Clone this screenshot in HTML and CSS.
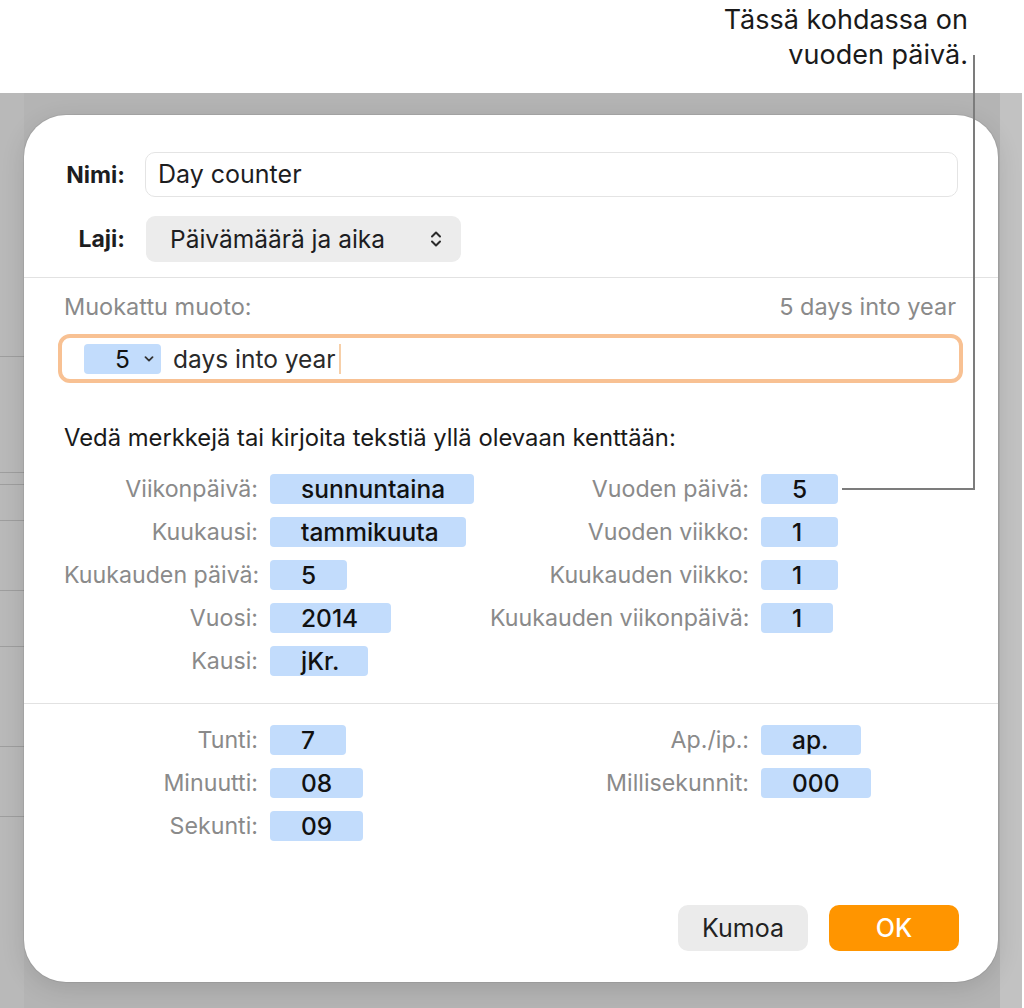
FILE: index.html
```html
<!DOCTYPE html>
<html lang="fi">
<head>
    <meta charset="UTF-8">
    <meta name="viewport" content="width=device-width, initial-scale=1.0">
    <title>Mukautettu päivämäärämuoto</title>
    <link rel="stylesheet" href="styles.css">
</head>
<body>
    <div class="callout">Tässä kohdassa on<br>vuoden päivä.</div>

    <div class="backdrop">
        <div class="sheet-lines">
            <div class="sheet-row r1"></div>
            <div class="sheet-row r2"></div>
            <div class="sheet-row r3"></div>
            <div class="sheet-row r4"></div>
            <div class="sheet-row r5"></div>
            <div class="sheet-row r6"></div>
            <div class="sheet-row r7"></div>
            <div class="sheet-row r8"></div>
        </div>

        <div class="dialog">
            <div class="dialog-top">
                <div class="field-label">Nimi:</div>
                <div class="text-input">Day counter</div>
                <div class="field-label">Laji:</div>
                <div class="popup">
                    <span>Päivämäärä ja aika</span>
                    <svg class="popup-arrows" width="12" height="20" viewBox="0 0 12 20">
                        <path d="M2 7.5 L6 3.5 L10 7.5" fill="none" stroke="#2b2b2b" stroke-width="2" stroke-linecap="round" stroke-linejoin="round"/>
                        <path d="M2 12.5 L6 16.5 L10 12.5" fill="none" stroke="#2b2b2b" stroke-width="2" stroke-linecap="round" stroke-linejoin="round"/>
                    </svg>
                </div>
            </div>

            <div class="format">
                <div class="format-head">
                    <span>Muokattu muoto:</span>
                    <span>5 days into year</span>
                </div>
                <div class="format-field">
                    <span class="token token-menu">5
                        <svg width="10" height="6" viewBox="0 0 10 6">
                            <path d="M1.5 1.2 L5 4.6 L8.5 1.2" fill="none" stroke="#333" stroke-width="1.8" stroke-linecap="round" stroke-linejoin="round"/>
                        </svg>
                    </span>
                    <span class="format-text">days into year</span>
                    <span class="caret"></span>
                </div>

                <p class="hint">Vedä merkkejä tai kirjoita tekstiä yllä olevaan kenttään:</p>

                <div class="token-grid">
                    <div class="token-label">Viikonpäivä:</div>
                    <div class="token w-204">sunnuntaina</div>
                    <div class="token-label">Vuoden päivä:</div>
                    <div class="token w-77">5</div>

                    <div class="token-label">Kuukausi:</div>
                    <div class="token w-196">tammikuuta</div>
                    <div class="token-label">Vuoden viikko:</div>
                    <div class="token w-77">1</div>

                    <div class="token-label">Kuukauden päivä:</div>
                    <div class="token w-77">5</div>
                    <div class="token-label">Kuukauden viikko:</div>
                    <div class="token w-77">1</div>

                    <div class="token-label">Vuosi:</div>
                    <div class="token w-121">2014</div>
                    <div class="token-label">Kuukauden viikonpäivä:</div>
                    <div class="token w-72">1</div>

                    <div class="token-label">Kausi:</div>
                    <div class="token w-98">jKr.</div>
                    <div></div>
                    <div></div>
                </div>
            </div>

            <div class="time">
                <div class="token-grid">
                    <div class="token-label">Tunti:</div>
                    <div class="token w-76">7</div>
                    <div class="token-label">Ap./ip.:</div>
                    <div class="token w-100">ap.</div>

                    <div class="token-label">Minuutti:</div>
                    <div class="token w-93">08</div>
                    <div class="token-label">Millisekunnit:</div>
                    <div class="token w-110">000</div>

                    <div class="token-label">Sekunti:</div>
                    <div class="token w-93">09</div>
                    <div></div>
                    <div></div>
                </div>
            </div>

            <div class="actions">
                <button class="btn btn-cancel">Kumoa</button>
                <button class="btn btn-ok">OK</button>
            </div>
        </div>
    </div>

    <!-- leader line from the callout to the "Vuoden päivä" token -->
    <svg class="leader" width="1024" height="1008" viewBox="0 0 1024 1008">
        <polyline points="974,55 974,489 842,489" fill="none" stroke="#7c7c7c" stroke-width="2"/>
    </svg>
</body>
</html>
```

FILE: styles.css
```css
* {
    margin: 0;
    padding: 0;
    box-sizing: border-box;
}

body {
    font-family: Inter, 'Noto Sans', sans-serif;
    width: 1024px;
    height: 1008px;
    overflow: hidden;
    position: relative;
    background: white;
    color: #1d1d1f;
}

.callout {
    height: 93px;
    padding: 2px 56px 0 0;
    text-align: right;
    font-size: 27px;
    line-height: 35px;
    color: #1a1a1a;
}

.backdrop {
    height: 915px;
    position: relative;
    padding: 22px 0 0 24px;
    background: linear-gradient(to right, #b4b4b4 0, #b4b4b4 1000px, #c2c2c2 1000px, #c2c2c2 1022px, #fff 1022px);
}

.sheet-lines {
    position: absolute;
    left: 0;
    top: 0;
    width: 24px;
    height: 100%;
    background: #b9b9b9;
}

.sheet-row {
    border-bottom: 1px solid #9e9e9e;
}

.r1 { height: 264px; }
.r2 { height: 116px; }
.r3 { height: 12px; }
.r4 { height: 36px; }
.r5 { height: 70px; }
.r6 { height: 56px; }
.r7 { height: 100px; }
.r8 { height: 70px; }

.dialog {
    position: relative;
    width: 974px;
    height: 867px;
    background: white;
    border-radius: 42px;
    box-shadow: 0 0 0 1px rgba(0,0,0,0.06), 0 6px 24px rgba(0,0,0,0.12);
    display: flex;
    flex-direction: column;
    overflow: hidden;
}

.dialog-top {
    display: grid;
    grid-template-columns: 61px 1fr;
    column-gap: 20px;
    row-gap: 19px;
    align-items: center;
    padding: 37px 40px 15px 40px;
    border-bottom: 1px solid #e2e2e2;
}

.field-label {
    font-size: 23px;
    font-weight: 700;
    text-align: right;
    white-space: nowrap;
    color: #1d1d1f;
}

.text-input {
    height: 45px;
    border: 1px solid #e4e4e4;
    border-radius: 10px;
    padding: 0 12px;
    font-size: 25px;
    line-height: 43px;
    color: #1d1d1f;
}

.popup {
    justify-self: start;
    width: 315px;
    height: 46px;
    margin-left: 1px;
    background: #ececec;
    border-radius: 9px;
    padding: 0 19px 0 24px;
    display: flex;
    align-items: center;
    justify-content: space-between;
    font-size: 24.5px;
    color: #1d1d1f;
}

.format {
    padding: 17px 35px 27px 34px;
    border-bottom: 1px solid #e2e2e2;
}

.format-head {
    display: flex;
    justify-content: space-between;
    padding: 0 7px 0 6px;
    font-size: 23.5px;
    line-height: 24px;
    color: #8a8a8a;
}

.format-field {
    margin-top: 15px;
    height: 49px;
    border: 4px solid #f8c193;
    border-radius: 12px;
    padding: 0 22px;
    display: flex;
    align-items: center;
}

.token {
    justify-self: start;
    height: 30px;
    background: #c2dcfc;
    border-radius: 4px;
    padding-left: 31px;
    font-size: 24.5px;
    font-weight: 500;
    line-height: 30px;
    color: #111;
}

.token-menu {
    width: 77px;
    display: flex;
    align-items: center;
    gap: 14px;
    font-weight: 400;
}

.format-text {
    margin-left: 12px;
    font-size: 24.5px;
    color: #2a2a2a;
}

.caret {
    width: 2px;
    height: 30px;
    margin-left: 3px;
    background: #f7cfa8;
}

.hint {
    margin: 43px 0 0 6px;
    font-size: 23.8px;
    line-height: 24px;
    color: #1a1a1a;
}

.token-grid {
    display: grid;
    grid-template-columns: 194px 208px 259px 1fr;
    column-gap: 12px;
    row-gap: 13px;
    align-items: center;
}

.format .token-grid {
    margin: 24px 0 0 6px;
}

.time {
    padding: 21px 40px 0 40px;
}

.token-label {
    text-align: right;
    font-size: 23.2px;
    color: #8a8a8a;
    white-space: nowrap;
}

.w-72 { width: 72px; }
.w-76 { width: 76px; }
.w-77 { width: 77px; }
.w-93 { width: 93px; }
.w-98 { width: 98px; }
.w-100 { width: 100px; }
.w-110 { width: 110px; }
.w-121 { width: 121px; }
.w-196 { width: 196px; }
.w-204 { width: 204px; }

.actions {
    margin-top: auto;
    padding: 0 39px 31px 0;
    display: flex;
    justify-content: flex-end;
    gap: 21px;
}

.btn {
    width: 130px;
    height: 46px;
    border: none;
    border-radius: 10px;
    font-family: inherit;
    font-size: 25px;
}

.btn-cancel {
    background: #ebebeb;
    color: #222;
}

.btn-ok {
    background: #ff9500;
    color: white;
    font-weight: 500;
}

.leader {
    position: absolute;
    left: 0;
    top: 0;
    pointer-events: none;
}
```
